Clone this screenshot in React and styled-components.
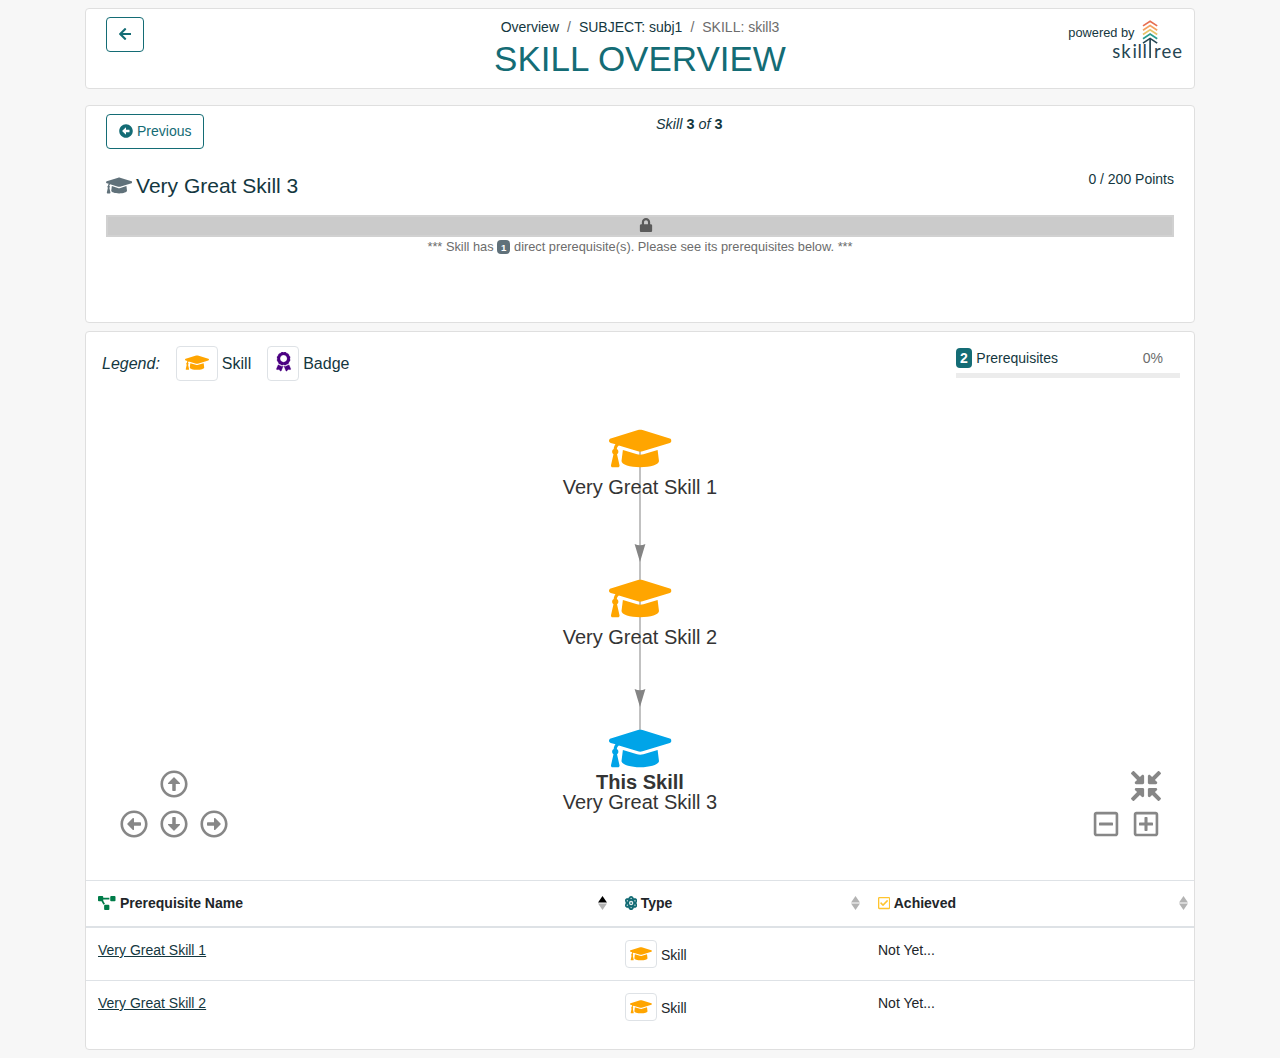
import React from 'react';
import styled, { createGlobalStyle } from 'styled-components';
import {
  FaArrowLeft,
  FaArrowAltCircleLeft,
  FaGraduationCap,
  FaLock,
  FaAward,
  FaProjectDiagram,
  FaRegArrowAltCircleUp,
  FaRegArrowAltCircleDown,
  FaRegArrowAltCircleLeft,
  FaRegArrowAltCircleRight,
  FaRegCheckSquare,
  FaRegMinusSquare,
  FaRegPlusSquare,
  FaCompressArrowsAlt,
  FaAtom,
} from 'react-icons/fa';

const GlobalStyle = createGlobalStyle`
  *, *::before, *::after { box-sizing: border-box; }
  body {
    margin: 0;
    background: #f7f7f7;
    color: #143740;
    font-family: "Liberation Sans", Arial, sans-serif;
    font-size: 14px;
    line-height: 21px;
  }
  svg { display: block; flex: none; }
`;

const Page = styled.main`
  width: 1110px;
  margin: 0 auto;
  padding: 8px 0;
`;

const Card = styled.section`
  background: #fff;
  border: 1px solid #dfdfdf;
  border-radius: 4px;
  height: ${(p) => p.$height}px;
  margin-bottom: ${(p) => p.$gap || 0}px;
`;

const Header = styled.div`
  display: grid;
  grid-template-columns: 1fr 400px 1fr;
  padding: 8px 12px 0 20px;
`;

const TitleBlock = styled.div`
  text-align: center;
  margin-left: -8px;
`;

const Button = styled.button`
  display: inline-flex;
  align-items: center;
  justify-self: start;
  gap: 4px;
  height: 35px;
  padding: 0 12px;
  border: 1px solid #146c75;
  border-radius: 4px;
  background: #fff;
  color: #146c75;
  font: inherit;
  svg { margin-bottom: 2px; }
`;

const Crumbs = styled.nav`
  display: flex;
  justify-content: center;
  gap: 8px;
  color: #6c6c6c;
`;

const Crumb = styled.span`
  color: ${(p) => (p.$active ? '#6c6c6c' : '#143740')};
`;

const Title = styled.h1`
  margin: 0;
  color: #146c75;
  font-size: 35px;
  font-weight: 400;
  line-height: 42px;
`;

const Brand = styled.div`
  display: flex;
  justify-content: flex-end;
  align-items: flex-start;
  font-size: 12.8px;
`;

const PoweredBy = styled.span`
  padding-top: 5px;
  margin-right: -22.5px;
`;

const BrandLogo = styled.svg`
  margin-top: 2px;
`;

const Overview = styled.div`
  padding: 8px 20px;
`;

const Pager = styled.div`
  display: flex;
`;

const Position = styled.div`
  flex: 1;
  text-align: center;
  font-size: 14.4px;
  font-style: italic;
  b { font-style: normal; }
`;

const SkillRow = styled.div`
  display: flex;
  justify-content: space-between;
  height: 66px;
  padding-top: 19px;
`;

const SkillName = styled.h2`
  display: flex;
  align-items: center;
  gap: 3.8px;
  height: 35px;
  margin: 0;
  font-size: 21px;
  font-weight: 400;
  svg { margin-bottom: 1px; color: #60717a; }
`;

const Points = styled.span`
  padding-top: 1px;
`;

const LockedBar = styled.div`
  display: flex;
  align-items: center;
  justify-content: center;
  height: 22px;
  padding: 0 0 2px 12px;
  border: 2px solid #d1d1d1;
  background: #cbcbcb;
  color: #5b5b5b;
`;

const Note = styled.p`
  margin: 0;
  color: #6c6c6c;
  font-size: 12.8px;
  line-height: 19px;
  text-align: center;
`;

const CountBadge = styled.span`
  display: inline-block;
  padding: ${(p) => (p.$large ? '3px 4px' : '3px 4px 2px')};
  border-radius: 4px;
  background: ${(p) => (p.$large ? '#146c75' : '#60717a')};
  color: #fff;
  font-size: ${(p) => (p.$large ? 14 : 9.6)}px;
  font-weight: 700;
  line-height: ${(p) => (p.$large ? 14 : 9)}px;
`;

const GraphHead = styled.div`
  display: flex;
  justify-content: space-between;
  height: 64px;
  padding: 14px 14px 0 16px;
`;

const Legend = styled.div`
  display: flex;
  align-items: center;
  gap: 16px;
  height: 35px;
  font-size: 16px;
`;

const LegendItem = styled.span`
  display: flex;
  align-items: center;
  gap: 4px;
`;

const IconBox = styled.span`
  display: inline-flex;
  align-items: center;
  justify-content: center;
  width: ${(p) => p.$w}px;
  height: ${(p) => p.$h}px;
  padding-bottom: ${(p) => p.$lift || 0}px;
  border: 1px solid #dee2e6;
  border-radius: 4px;
  color: ${(p) => p.$color || '#ffa500'};
`;

const Progress = styled.div`
  width: 224px;
`;

const ProgressLabel = styled.div`
  display: flex;
  align-items: center;
  gap: 4.5px;
  height: 24px;
  padding-right: 17px;
`;

const Percent = styled.span`
  margin-left: auto;
  color: #6c6c6c;
`;

const Track = styled.div`
  height: 5px;
  margin-top: 3px;
  background: #ececec;
`;

const GraphArea = styled.div`
  display: grid;
  grid-template-columns: 200px 1fr 200px;
  height: 484px;
`;

const Network = styled.svg`
  width: 708px;
  height: 484px;
  font-size: 20px;
`;

const NavPad = styled.div`
  display: grid;
  grid-template-columns: repeat(3, 40px);
  grid-template-rows: repeat(2, 40px);
  align-self: end;
  justify-self: start;
  place-items: center;
  margin: 0 0 36px 28px;
  color: #878787;
`;

const ZoomPad = styled(NavPad)`
  grid-template-columns: repeat(2, 40px);
  justify-self: end;
  margin: 0 28px 36px 0;
`;

const PadCell = styled.span`
  grid-column: ${(p) => p.$col};
  grid-row: ${(p) => p.$row};
  padding-top: ${(p) => p.$drop || 0}px;
`;

const Table = styled.table`
  width: 100%;
  table-layout: fixed;
  border-collapse: separate;
  border-spacing: 0;
  color: #212529;
`;

const HeadCell = styled.th`
  width: ${(p) => p.$width};
  height: 48px;
  padding: 0 6px 0 12px;
  border-top: 1px solid #dee2e6;
  border-bottom: 2px solid #dee2e6;
`;

const HeadContent = styled.div`
  display: flex;
  align-items: center;
  gap: ${(p) => p.$gap || 3.5}px;
  svg { margin-bottom: 1px; }
`;

const HeadIcon = styled.span`
  color: ${(p) => p.$color};
`;

const SortMark = styled.svg`
  margin-left: auto;
`;

const Cell = styled.td`
  height: ${(p) => (p.$last ? 52 : 53)}px;
  padding: 12px 12px 0;
  border-bottom: ${(p) => (p.$last ? 0 : 1)}px solid #dee2e6;
  vertical-align: top;
`;

const TypeCell = styled.div`
  display: flex;
  align-items: center;
  gap: 4px;
  height: 28px;
`;

const TypeName = styled.span`
  padding-top: 2px;
`;

const SkillLink = styled.a`
  color: #143740;
  text-decoration: underline;
`;

function Logo() {
  const colors = ['#e76f51', '#f4a261', '#e9c46a', '#2a9d8f', '#264653'];
  return (
    <BrandLogo width="70" height="42" viewBox="0 0 70 42">
      <g fill="none" strokeWidth="1.7">
        {colors.map((c, i) => (
          <path key={c} stroke={c} d={`M31 ${6.9 + i * 4.3}L38.1 ${2.2 + i * 4.3}L45.2 ${6.9 + i * 4.3}`} />
        ))}
        <path stroke="#264653" d="M38.1 19v20" />
      </g>
      <g fill="#264653" fontFamily="Lato, sans-serif" fontSize="18.5">
        <text x="0.3 9.3 20.4 25.5 30.5" y="38.5">skill</text>
        <text x="42" y="38.5" textLength="28" lengthAdjust="spacing">ree</text>
      </g>
    </BrandLogo>
  );
}

function CapIcon({ size }) {
  return <FaGraduationCap style={{ width: size * 1.25, height: size }} />;
}

function Sort({ ascending }) {
  return (
    <SortMark width="9" height="14" viewBox="0 0 9 14">
      <path d="M0 6.5L4.5 0L9 6.5Z" fill={ascending ? '#000' : '#b3b3b3'} />
      <path d="M0 7.5L4.5 14L9 7.5Z" fill="#b3b3b3" />
    </SortMark>
  );
}

const nodes = [
  { y: 52.5, name: 'Very Great Skill 1', labelY: 98 },
  { y: 202.5, name: 'Very Great Skill 2', labelY: 248 },
  { y: 352.5, name: 'Very Great Skill 3', labelY: 413, current: true },
];

function SkillGraph() {
  return (
    <Network viewBox="0 0 708 484">
      <path d="M354 52V352" stroke="#c1c1c1" strokeWidth="2" />
      {[166, 311].map((y) => (
        <path key={y} d={`M354 ${y}L348.6 ${y - 18}Q354 ${y - 15.5} 359.4 ${y - 18}Z`} fill="#848484" />
      ))}
      {nodes.map((n) => (
        <g key={n.name}>
          <g transform={`translate(323 ${n.y - 25})`} color={n.current ? '#00a4e8' : '#ffa500'}>
            <CapIcon size={50} />
          </g>
          <g textAnchor="middle" fill="#343434">
            {n.current && <text x="354" y={n.labelY - 20} fontWeight="700">This Skill</text>}
            <text x="354" y={n.labelY}>{n.name}</text>
          </g>
        </g>
      ))}
    </Network>
  );
}

const rows = ['Very Great Skill 1', 'Very Great Skill 2'];

function PrerequisiteRow({ name, last }) {
  return (
    <tr>
      <Cell $last={last}><SkillLink>{name}</SkillLink></Cell>
      <Cell $last={last}>
        <TypeCell>
          <IconBox $w={32} $h={28}><CapIcon size={17.5} /></IconBox>
          <TypeName>Skill</TypeName>
        </TypeCell>
      </Cell>
      <Cell $last={last}>Not Yet...</Cell>
    </tr>
  );
}

export default function App() {
  return (
    <Page>
      <GlobalStyle />
      <Card $height={81} $gap={16}>
        <Header>
          <Button aria-label="Back">
            <FaArrowLeft style={{ width: 12.25, height: 14 }} />
          </Button>
          <TitleBlock>
            <Crumbs>
              <Crumb>Overview</Crumb>/<Crumb>SUBJECT: subj1</Crumb>/<Crumb $active>SKILL: skill3</Crumb>
            </Crumbs>
            <Title>SKILL OVERVIEW</Title>
          </TitleBlock>
          <Brand>
            <PoweredBy>powered by</PoweredBy>
            <Logo />
          </Brand>
        </Header>
      </Card>

      <Card $height={218} $gap={8}>
        <Overview>
          <Pager>
            <Button><FaArrowAltCircleLeft size={14} />Previous</Button>
            <Position>Skill <b>3</b> of <b>3</b></Position>
          </Pager>
          <SkillRow>
            <SkillName><CapIcon size={21} />Very Great Skill 3</SkillName>
            <Points>0 / 200 Points</Points>
          </SkillRow>
          <LockedBar><FaLock size={14} /></LockedBar>
          <Note>
            *** Skill has <CountBadge>1</CountBadge> direct prerequisite(s). Please see its prerequisites below. ***
          </Note>
        </Overview>
      </Card>

      <Card $height={719}>
        <GraphHead>
          <Legend>
            <em>Legend:</em>
            <LegendItem><IconBox $w={42} $h={35} $lift={2}><CapIcon size={19.2} /></IconBox>Skill</LegendItem>
            <LegendItem>
              <IconBox $w={32} $h={35} $lift={3} $color="#4b0082">
                <FaAward size={19.2} stroke="currentColor" strokeWidth={6} />
              </IconBox>
              Badge
            </LegendItem>
          </Legend>
          <Progress>
            <ProgressLabel>
              <CountBadge $large>2</CountBadge>Prerequisites<Percent>0%</Percent>
            </ProgressLabel>
            <Track />
          </Progress>
        </GraphHead>
        <GraphArea>
          <NavPad>
            <PadCell $col={2} $row={1}><FaRegArrowAltCircleUp size={28} /></PadCell>
            <PadCell $col={1} $row={2}><FaRegArrowAltCircleLeft size={28} /></PadCell>
            <PadCell $col={2} $row={2}><FaRegArrowAltCircleDown size={28} /></PadCell>
            <PadCell $col={3} $row={2}><FaRegArrowAltCircleRight size={28} /></PadCell>
          </NavPad>
          <SkillGraph />
          <ZoomPad>
            <PadCell $col={2} $row={1} $drop={4}><FaCompressArrowsAlt size={30} /></PadCell>
            <PadCell $col={1} $row={2}><FaRegMinusSquare size={28} /></PadCell>
            <PadCell $col={2} $row={2}><FaRegPlusSquare size={28} /></PadCell>
          </ZoomPad>
        </GraphArea>
        <Table>
          <thead>
            <tr>
              <HeadCell $width="527px">
                <HeadContent $gap={4.5}>
                  <HeadIcon $color="#007c49"><FaProjectDiagram style={{ width: 17.5, height: 14 }} /></HeadIcon>
                  Prerequisite Name<Sort ascending />
                </HeadContent>
              </HeadCell>
              <HeadCell $width="253px">
                <HeadContent>
                  <HeadIcon $color="#146c75">
                    <FaAtom stroke="currentColor" strokeWidth={8} style={{ width: 12.25, height: 14 }} />
                  </HeadIcon>
                  Type<Sort />
                </HeadContent>
              </HeadCell>
              <HeadCell $width="328px">
                <HeadContent>
                  <HeadIcon $color="#ffc42e"><FaRegCheckSquare style={{ width: 12.25, height: 14 }} /></HeadIcon>
                  Achieved<Sort />
                </HeadContent>
              </HeadCell>
            </tr>
          </thead>
          <tbody>
            {rows.map((name, i) => (
              <PrerequisiteRow key={name} name={name} last={i === rows.length - 1} />
            ))}
          </tbody>
        </Table>
      </Card>
    </Page>
  );
}
